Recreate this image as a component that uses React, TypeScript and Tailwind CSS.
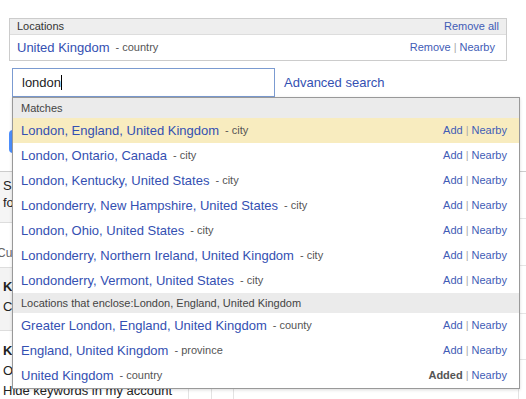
import React from "react";

const matches = [
  { name: "London, England, United Kingdom", type: "city", active: true },
  { name: "London, Ontario, Canada", type: "city" },
  { name: "London, Kentucky, United States", type: "city" },
  { name: "Londonderry, New Hampshire, United States", type: "city" },
  { name: "London, Ohio, United States", type: "city" },
  { name: "Londonderry, Northern Ireland, United Kingdom", type: "city" },
  { name: "Londonderry, Vermont, United States", type: "city" },
];

const enclosing = [
  { name: "Greater London, England, United Kingdom", type: "county" },
  { name: "England, United Kingdom", type: "province" },
  { name: "United Kingdom", type: "country", added: true },
];

function Row({ name, type, active, added }: { name: string; type: string; active?: boolean; added?: boolean }) {
  return (
    <div className={`h-[25px] flex items-center pl-[8px] pr-[12px] ${active ? "bg-[#f8ecbf]" : ""}`}>
      <span className="text-[13px] text-[#3450b2]">{name}</span>
      <span className="ml-[6px] text-[11px] text-[#555]">- {type}</span>
      <span className="ml-auto text-[11px]">
        {added ? <span className="font-bold text-[#555]">Added</span> : <span className="text-[#3f5cb6]">Add</span>}
        <span className="text-[#aaa] mx-[3px]">|</span>
        <span className="text-[#3f5cb6]">Nearby</span>
      </span>
    </div>
  );
}

export default function App() {
  return (
    <div className="relative w-[526px] h-[399px] overflow-hidden bg-white font-['Liberation_Sans',Arial,sans-serif] text-[#222]">
      <div className="pt-[18px]">
        {/* selected locations */}
        <div className="ml-[9px] w-[498px] border border-[#ccc]">
          <div className="h-[16px] bg-[#eee] border-b border-[#ddd] flex items-center px-[7px] text-[11px]">
            <span className="text-[#333]">Locations</span>
            <span className="ml-auto text-[#3f5cb6]">Remove all</span>
          </div>
          <div className="h-[25px] flex items-center pl-[7px] pr-[11px]">
            <span className="text-[13px] text-[#3450b2]">United Kingdom</span>
            <span className="ml-[6px] text-[11px] text-[#555]">- country</span>
            <span className="ml-auto text-[11px]">
              <span className="text-[#3f5cb6]">Remove</span>
              <span className="text-[#aaa] mx-[3px]">|</span>
              <span className="text-[#3f5cb6]">Nearby</span>
            </span>
          </div>
        </div>

        {/* search box */}
        <div className="mt-[7px] ml-[12px] flex items-center">
          <div className="w-[263px] h-[29px] border border-[#7b9bd1] flex items-center pl-[9px] text-[13px] text-[#222]">
            london<span className="inline-block w-px h-[15px] bg-black" />
          </div>
          <span className="ml-[9px] text-[13px] text-[#3450b2]">Advanced search</span>
        </div>
      </div>

      {/* page content behind the menu */}
      <div className="flex text-[13px]">
        <div className="w-[189px] border-r border-[#e3e3e3]">
          <div className="h-[74px] pt-[33px] pl-[9px]">
            <div className="w-[80px] h-[23px] rounded-sm bg-[#4d90fe]" />
          </div>
          <div className="h-[51px] border-t border-[#ccc] bg-[#f5f5f5] pl-[3px] pt-[5px] leading-[17px]">
            <div>Show</div>
            <div>for</div>
          </div>
          <div className="h-[45px] border-t border-[#ddd] pt-[21px] pl-[0px] text-[12px] text-[#666] -ml-[3px]">Custom</div>
          <div className="h-[63px] border-t border-[#ddd] bg-[#f3f3f3] pt-[9px] pl-[3px] leading-[20px]">
            <div className="font-bold">Keywords</div>
            <div>Content</div>
          </div>
          <div className="border-t border-[#ddd] pt-[10px] pl-[3px] leading-[20px]">
            <div className="font-bold">Keywords</div>
            <div>Other</div>
            <div>Hide keywords in my account</div>
          </div>
        </div>
        <div className="w-[23px] h-[400px] border-r border-[#e3e3e3]" />
        <div className="w-[22px] h-[400px] border-r border-[#e3e3e3]" />
        <div className="flex-1" />
        <div className="w-[8px] border-l border-[#e3e3e3]">
          <div className="h-[74px]" />
          <div className="h-[47px] border-t border-[#ccc]" />
          <div className="h-[47px] border-t border-[#e5e5e5]" />
          <div className="h-[48px] border-t border-[#e5e5e5]" />
          <div className="h-[46px] border-t border-[#e5e5e5]" />
          <div className="h-[40px] border-t border-[#e5e5e5]" />
        </div>
      </div>

      {/* suggestion menu */}
      <div className="absolute left-[12px] top-[97px] w-[508px] border border-[#999] bg-white shadow-[0_1px_3px_rgba(0,0,0,0.15)]">
        <div className="h-[20px] bg-[#ebebeb] flex items-center pl-[8px] text-[11px] text-[#444]">Matches</div>
        {matches.map((m) => (
          <Row key={m.name} {...m} />
        ))}
        <div className="h-[20px] bg-[#ebebeb] flex items-center pl-[8px] text-[11px] text-[#444]">
          Locations that enclose:London, England, United Kingdom
        </div>
        {enclosing.map((m) => (
          <Row key={m.name} {...m} />
        ))}
      </div>
    </div>
  );
}
